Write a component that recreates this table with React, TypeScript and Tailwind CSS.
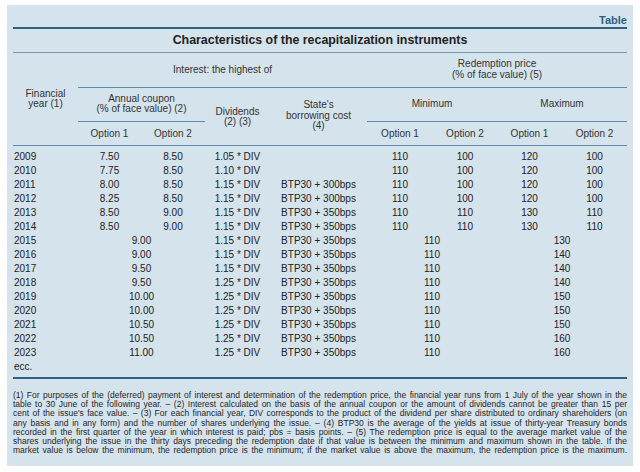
import React from "react";

type Full = [string, string, string, string, string, string, string, string, string];
type Merged = [string, string, string, string, string, string];

const full: Full[] = [
  ["2009", "7.50", "8.50", "1.05 * DIV", "", "110", "100", "120", "100"],
  ["2010", "7.75", "8.50", "1.10 * DIV", "", "110", "100", "120", "100"],
  ["2011", "8.00", "8.50", "1.15 * DIV", "BTP30 + 300bps", "110", "100", "120", "100"],
  ["2012", "8.25", "8.50", "1.15 * DIV", "BTP30 + 300bps", "110", "100", "120", "100"],
  ["2013", "8.50", "9.00", "1.15 * DIV", "BTP30 + 350bps", "110", "110", "130", "110"],
  ["2014", "8.50", "9.00", "1.15 * DIV", "BTP30 + 350bps", "110", "110", "130", "110"],
];

const merged: Merged[] = [
  ["2015", "9.00", "1.15 * DIV", "BTP30 + 350bps", "110", "130"],
  ["2016", "9.00", "1.15 * DIV", "BTP30 + 350bps", "110", "140"],
  ["2017", "9.50", "1.15 * DIV", "BTP30 + 350bps", "110", "140"],
  ["2018", "9.50", "1.25 * DIV", "BTP30 + 350bps", "110", "140"],
  ["2019", "10.00", "1.25 * DIV", "BTP30 + 350bps", "110", "150"],
  ["2020", "10.00", "1.25 * DIV", "BTP30 + 350bps", "110", "150"],
  ["2021", "10.50", "1.25 * DIV", "BTP30 + 350bps", "110", "150"],
  ["2022", "10.50", "1.25 * DIV", "BTP30 + 350bps", "110", "160"],
  ["2023", "11.00", "1.25 * DIV", "BTP30 + 350bps", "110", "160"],
];

const notes = [
  "(1) For purposes of the (deferred) payment of interest and determination of the redemption price, the financial year runs from 1 July of the year shown in the",
  "table to 30 June of the following year. – (2) Interest calculated on the basis of the annual coupon or the amount of dividends cannot be greater than 15 per",
  "cent of the issue's face value. – (3) For each financial year, DIV corresponds to the product of the dividend per share distributed to ordinary shareholders (on",
  "any basis and in any form) and the number of shares underlying the issue. – (4) BTP30 is the average of the yields at issue of thirty-year Treasury bonds",
  "recorded in the first quarter of the year in which interest is paid; pbs = basis points. – (5) The redemption price is equal to the average market value of the",
  "shares underlying the issue in the thirty days preceding the redemption date if that value is between the minimum and maximum shown in the table. If the",
  "market value is below the minimum, the redemption price is the minimum; if the market value is above the maximum, the redemption price is the maximum.",
];

export default function App() {
  return (
    <div className="w-[640px] h-[472px] bg-white pt-[5px] pl-[7px] font-['Liberation_Sans',Arial,sans-serif]">
      <div className="w-[626px] h-[461px] bg-[#d5e3ed] pt-[9px] px-[6px] text-[#262626]">
        <div className="h-[13px] leading-[13px] text-right text-[11px] font-bold text-[#2d5f80]">Table</div>
        <div className="border-t-2 border-[#2d5f80]" />
        <div className="h-[24px] flex items-center justify-center text-[12.4px] font-bold text-[#222] border-b border-[#7199b1]">
          Characteristics of the recapitalization instruments
        </div>
        <table className="w-[614px] table-fixed border-collapse text-[10px] leading-[10.5px]">
          <colgroup>
            <col className="w-[65px]" />
            <col className="w-[63px]" />
            <col className="w-[64px]" />
            <col className="w-[65px]" />
            <col className="w-[97px]" />
            <col className="w-[66px]" />
            <col className="w-[64px]" />
            <col className="w-[65px]" />
            <col className="w-[65px]" />
          </colgroup>
          <thead className="font-normal text-[#333]">
            <tr className="h-[34px]">
              <th rowSpan={3} className="font-normal text-center align-middle pt-[1px]">
                Financial
                <br />
                year (1)
              </th>
              <th colSpan={4} className="font-normal text-center align-middle border-b border-[#5e8ba7]">
                Interest: the highest of
              </th>
              <th colSpan={4} className="font-normal text-center align-middle border-b border-[#5e8ba7]">
                Redemption price
                <br />
                (% of face value) (5)
              </th>
            </tr>
            <tr className="h-[34px]">
              <th colSpan={2} className="font-normal text-center align-middle border-b border-[#5e8ba7]">
                Annual coupon
                <br />
                (% of face value) (2)
              </th>
              <th rowSpan={2} className="font-normal text-center align-middle pt-[2px]">
                Dividends
                <br />
                (2) (3)
              </th>
              <th rowSpan={2} className="font-normal text-center align-middle">
                State's
                <br />
                borrowing cost
                <br />
                (4)
              </th>
              <th colSpan={2} className="font-normal text-center align-middle border-b border-[#5e8ba7]">
                Minimum
              </th>
              <th colSpan={2} className="font-normal text-center align-middle border-b border-[#5e8ba7]">
                Maximum
              </th>
            </tr>
            <tr className="h-[24px] border-b border-[#5e8ba7]">
              <th className="font-normal text-center align-middle pt-[2px]">Option 1</th>
              <th className="font-normal text-center align-middle pt-[2px]">Option 2</th>
              <th className="font-normal text-center align-middle pt-[2px]">Option 1</th>
              <th className="font-normal text-center align-middle pt-[2px]">Option 2</th>
              <th className="font-normal text-center align-middle pt-[2px]">Option 1</th>
              <th className="font-normal text-center align-middle pt-[2px]">Option 2</th>
            </tr>
          </thead>
          <tbody className="text-[#222]">
            <tr className="h-[5px]">
              <td colSpan={9} />
            </tr>
            {full.map((r) => (
              <tr key={r[0]} className="h-[14px]">
                <td className="text-left pl-[1px] align-middle">{r[0]}</td>
                <td className="text-center align-middle">{r[1]}</td>
                <td className="text-center align-middle">{r[2]}</td>
                <td className="text-center align-middle">{r[3]}</td>
                <td className="text-center align-middle">{r[4]}</td>
                <td className="text-center align-middle">{r[5]}</td>
                <td className="text-center align-middle">{r[6]}</td>
                <td className="text-center align-middle">{r[7]}</td>
                <td className="text-center align-middle">{r[8]}</td>
              </tr>
            ))}
            {merged.map((r) => (
              <tr key={r[0]} className="h-[14px]">
                <td className="text-left pl-[1px] align-middle">{r[0]}</td>
                <td colSpan={2} className="text-center align-middle">{r[1]}</td>
                <td className="text-center align-middle">{r[2]}</td>
                <td className="text-center align-middle">{r[3]}</td>
                <td colSpan={2} className="text-center align-middle">{r[4]}</td>
                <td colSpan={2} className="text-center align-middle">{r[5]}</td>
              </tr>
            ))}
            <tr className="h-[18px] border-b-2 border-[#2d5f80]">
              <td className="text-left pl-[1px] align-top pt-[2px]">ecc.</td>
              <td colSpan={8} />
            </tr>
          </tbody>
        </table>
        <div className="pt-[12px] text-[8.5px] leading-[9.2px] text-[#262626]">
          {notes.map((n, i) => (
            <div key={i} className="text-justify [text-align-last:justify]">
              {n}
            </div>
          ))}
        </div>
      </div>
    </div>
  );
}
